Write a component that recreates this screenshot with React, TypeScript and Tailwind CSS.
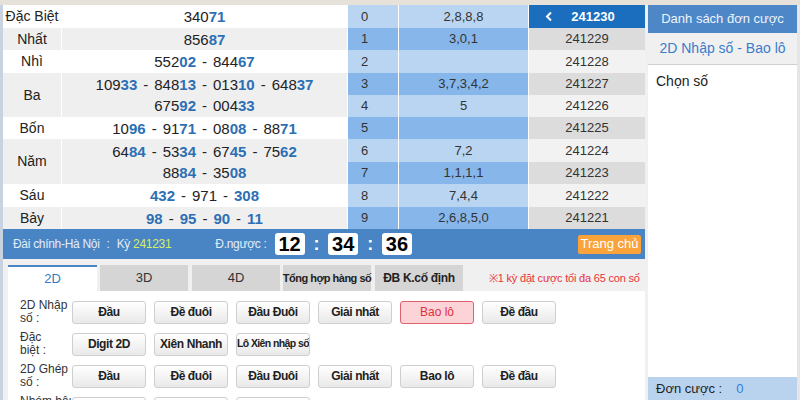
import React from "react";

type Part = { t: string; b?: boolean };
const rows: { label: string; h: number; lines: Part[][][]; bg: string }[] = [
  { label: "Đặc Biệt", h: 23, bg: "bg-white", lines: [[[{ t: "340" }, { t: "71", b: true }]]] },
  { label: "Nhất", h: 22, bg: "bg-[#efefef]", lines: [[[{ t: "856" }, { t: "87", b: true }]]] },
  { label: "Nhì", h: 23, bg: "bg-white", lines: [[[{ t: "552" }, { t: "02", b: true }], [{ t: "844" }, { t: "67", b: true }]]] },
  {
    label: "Ba",
    h: 44,
    bg: "bg-[#efefef]",
    lines: [
      [[{ t: "109" }, { t: "33", b: true }], [{ t: "848" }, { t: "13", b: true }], [{ t: "013" }, { t: "10", b: true }], [{ t: "648" }, { t: "37", b: true }]],
      [[{ t: "675" }, { t: "92", b: true }], [{ t: "004" }, { t: "33", b: true }]],
    ],
  },
  { label: "Bốn", h: 22, bg: "bg-white", lines: [[[{ t: "10" }, { t: "96", b: true }], [{ t: "91" }, { t: "71", b: true }], [{ t: "08" }, { t: "08", b: true }], [{ t: "88" }, { t: "71", b: true }]]] },
  {
    label: "Năm",
    h: 45,
    bg: "bg-[#efefef]",
    lines: [
      [[{ t: "64" }, { t: "84", b: true }], [{ t: "53" }, { t: "34", b: true }], [{ t: "67" }, { t: "45", b: true }], [{ t: "75" }, { t: "62", b: true }]],
      [[{ t: "88" }, { t: "84", b: true }], [{ t: "35" }, { t: "08", b: true }]],
    ],
  },
  { label: "Sáu", h: 23, bg: "bg-white", lines: [[[{ t: "432", b: true }], [{ t: "971" }], [{ t: "308", b: true }]]] },
  { label: "Bảy", h: 22, bg: "bg-[#efefef]", lines: [[[{ t: "98", b: true }], [{ t: "95", b: true }], [{ t: "90", b: true }], [{ t: "11", b: true }]]] },
];

const heads = ["2,8,8,8", "3,0,1", "", "3,7,3,4,2", "5", "", "7,2", "1,1,1,1", "7,4,4", "2,6,8,5,0"];
const dates = ["241230", "241229", "241228", "241227", "241226", "241225", "241224", "241223", "241222", "241221"];
const rowH = [23, 22, 23, 22, 22, 22, 23, 22, 23, 22];

function Btn({ children, active, small }: { children: React.ReactNode; active?: boolean; small?: boolean }) {
  return (
    <div
      className={
        active
          ? "w-[74px] h-[23px] shrink-0 flex items-center justify-center rounded-[3px] border border-[#e0606c] bg-[#fcd3d7] text-[#e0303c] text-[12px]"
          : `w-[74px] h-[23px] shrink-0 flex items-center justify-center rounded-[3px] border border-[#cfcfcf] bg-gradient-to-b from-white to-[#e9e9e9] text-[#222] font-bold whitespace-nowrap overflow-hidden ${
              small ? "text-[10.5px] tracking-[-0.6px]" : "text-[12px] tracking-[-0.4px]"
            }`
      }
    >
      {children}
    </div>
  );
}

function BtnRow({ label, items, activeIdx }: { label: [string, string]; items: string[]; activeIdx?: number }) {
  return (
    <div className="flex items-center h-[32px]">
      <div className="w-[64px] shrink-0 pl-[12px] text-[12px] leading-[13px] text-[#333] whitespace-nowrap">
        <div>{label[0]}</div>
        <div>{label[1]}</div>
      </div>
      <div className="flex gap-[8px]">
        {items.map((it, i) => (
          <Btn key={i} active={i === activeIdx} small={it.length > 12}>
            {it}
          </Btn>
        ))}
      </div>
    </div>
  );
}

export default function App() {
  return (
    <div className="w-[800px] h-[400px] overflow-hidden bg-[#f0f0f0] flex flex-col" style={{ fontFamily: '"Liberation Sans", Arial, sans-serif' }}>
      <div className="h-[5px] bg-[#e7e2d9] shrink-0" />
      <div className="flex flex-1 min-h-0">
        {/* main */}
        <div className="w-[645px] shrink-0 flex flex-col border-l-[3px] border-[#c9d3df]">
          <div className="flex">
            {/* results */}
            <div className="w-[344px] flex flex-col">
              {rows.map((r, i) => (
                <div key={i} className={`flex ${r.bg}`} style={{ height: r.h }}>
                  <div className="w-[59px] border-r border-white flex items-center justify-center text-[14px] text-[#222]">{r.label}</div>
                  <div className="flex-1 flex flex-col items-center justify-center text-[15px] leading-[21px] text-[#222]">
                    {r.lines.map((ln, j) => (
                      <div key={j} className="flex whitespace-nowrap">
                        {ln.map((grp, k) => (
                          <span key={k}>
                            {k > 0 && <span className="mx-[6px]">-</span>}
                            {grp.map((p, m) => (
                              <span key={m} className={p.b ? "font-bold text-[#2d6fb4]" : ""}>
                                {p.t}
                              </span>
                            ))}
                          </span>
                        ))}
                      </div>
                    ))}
                  </div>
                </div>
              ))}
            </div>
            {/* heads */}
            <div className="w-[51px] flex flex-col border-l border-white">
              {heads.map((_, i) => (
                <div key={i} className={`flex items-center pl-[13px] text-[13px] text-[#333] ${i % 2 === 0 ? "bg-[#bad5f1]" : "bg-[#87b6eb]"}`} style={{ height: rowH[i] }}>
                  {i}
                </div>
              ))}
            </div>
            <div className="w-[130px] flex flex-col border-l border-white">
              {heads.map((h, i) => (
                <div key={i} className={`flex items-center justify-center text-[13px] text-[#333] ${i % 2 === 0 ? "bg-[#bad5f1]" : "bg-[#87b6eb]"}`} style={{ height: rowH[i] }}>
                  {h}
                </div>
              ))}
            </div>
            <div className="flex-1 flex flex-col border-l border-white">
              {dates.map((d, i) => (
                <div
                  key={i}
                  className={`flex items-center justify-center text-[13px] ${
                    i === 0 ? "bg-[#1b6ebd] text-white font-bold" : i % 2 === 1 ? "bg-[#dcdcdc] text-[#333]" : "bg-[#f2f2f2] text-[#333]"
                  }`}
                  style={{ height: rowH[i] }}
                >
                  {i === 0 && (
                    <svg width="8" height="11" viewBox="0 0 8 11" className="mr-[18px] -ml-[14px]">
                      <path d="M6 1.5 L2 5.5 L6 9.5" stroke="white" strokeWidth="2" fill="none" />
                    </svg>
                  )}
                  {d}
                </div>
              ))}
            </div>
          </div>
          {/* blue bar */}
          <div className="h-[30px] bg-[#4985c5] flex items-center text-[12px] tracking-[-0.3px] text-[#e3edf8] pl-[10px] pr-[4px] shrink-0 whitespace-nowrap">
            <span>Đài chính-Hà Nội</span>
            <span className="ml-[7px]">:</span>
            <span className="ml-[7px]">Kỳ</span>
            <span className="ml-[3px] text-[#d6ee62]">241231</span>
            <span className="ml-[44px]">Đ.ngược :</span>
            <div className="ml-[8px] w-[30px] h-[22px] bg-white rounded-[3px] flex items-center justify-center text-[20px] font-bold text-black tracking-normal">12</div>
            <span className="mx-[9px] text-[18px] font-bold text-white">:</span>
            <div className="w-[30px] h-[22px] bg-white rounded-[3px] flex items-center justify-center text-[20px] font-bold text-black tracking-normal">34</div>
            <span className="mx-[9px] text-[18px] font-bold text-white">:</span>
            <div className="w-[30px] h-[22px] bg-white rounded-[3px] flex items-center justify-center text-[20px] font-bold text-black tracking-normal">36</div>
            <div className="ml-auto w-[63px] h-[19px] bg-[#f9a33a] rounded-[2px] flex items-center justify-center text-white text-[13px] tracking-normal">Trang chủ</div>
          </div>
          {/* tabs */}
          <div className="flex items-end pl-[5px] mt-[6px] h-[26px] shrink-0">
            <div className="w-[89px] shrink-0 h-[26px] bg-white border-t-2 border-[#4a86c6] flex items-center justify-center text-[13px] text-[#3a78c0]">2D</div>
            <div className="ml-[3px] w-[88px] shrink-0 h-[26px] bg-[#d5d5d5] flex items-center justify-center text-[13px] text-[#333]">3D</div>
            <div className="ml-[4px] w-[88px] shrink-0 h-[26px] bg-[#d5d5d5] flex items-center justify-center text-[13px] text-[#333]">4D</div>
            <div className="ml-[3px] w-[88px] shrink-0 h-[26px] bg-[#d5d5d5] flex items-center justify-center text-[11px] font-bold text-[#222] tracking-[-0.5px] whitespace-nowrap">Tổng hợp hàng số</div>
            <div className="ml-[4px] w-[88px] shrink-0 h-[26px] bg-[#d5d5d5] flex items-center justify-center text-[12px] font-bold text-[#222] tracking-[-0.3px] whitespace-nowrap">ĐB K.cố định</div>
            <div className="ml-[26px] h-[26px] flex items-center text-[11px] tracking-[-0.2px] text-[#e8333a] whitespace-nowrap">※1 kỳ đặt cược tối đa 65 con số</div>
          </div>
          {/* content */}
          <div className="flex-1 bg-white ml-[5px] pt-[5px]">
            <BtnRow label={["2D Nhập", "số :"]} items={["Đầu", "Đề đuôi", "Đầu Đuôi", "Giải nhất", "Bao lô", "Đề đầu"]} activeIdx={4} />
            <BtnRow label={["Đặc", "biệt :"]} items={["Digit 2D", "Xiên Nhanh", "Lô Xiên nhập số"]} />
            <BtnRow label={["2D Ghép", "số :"]} items={["Đầu", "Đề đuôi", "Đầu Đuôi", "Giải nhất", "Bao lô", "Đề đầu"]} />
            <BtnRow label={["Nhóm bậu", "số :"]} items={["Đầu", "Đề đuôi", "Đầu Đuôi"]} />
          </div>
        </div>
        <div className="w-[3px] shrink-0" />
        {/* right panel */}
        <div className="w-[149px] shrink-0 bg-white flex flex-col">
          <div className="h-[28px] bg-[#4d87c7] flex items-center justify-center text-[13px] text-[#eef4fb] shrink-0">Danh sách đơn cược</div>
          <div className="h-[32px] bg-[#f0f0f0] border-b border-[#cfcfcf] flex items-center justify-center text-[14px] text-[#3b7dc9] shrink-0">2D Nhập số - Bao lô</div>
          <div className="pl-[8px] pt-[6px] text-[14px] text-[#222]">Chọn số</div>
          <div className="mt-auto h-[23px] bg-[#b9d3ef] flex items-center pl-[8px] text-[13px] text-[#222] shrink-0">
            <span>Đơn cược :</span>
            <span className="ml-[14px] text-[#2e7fe0]">0</span>
          </div>
        </div>
        <div className="w-[3px] bg-[#e6e6e6] shrink-0" />
      </div>
    </div>
  );
}
